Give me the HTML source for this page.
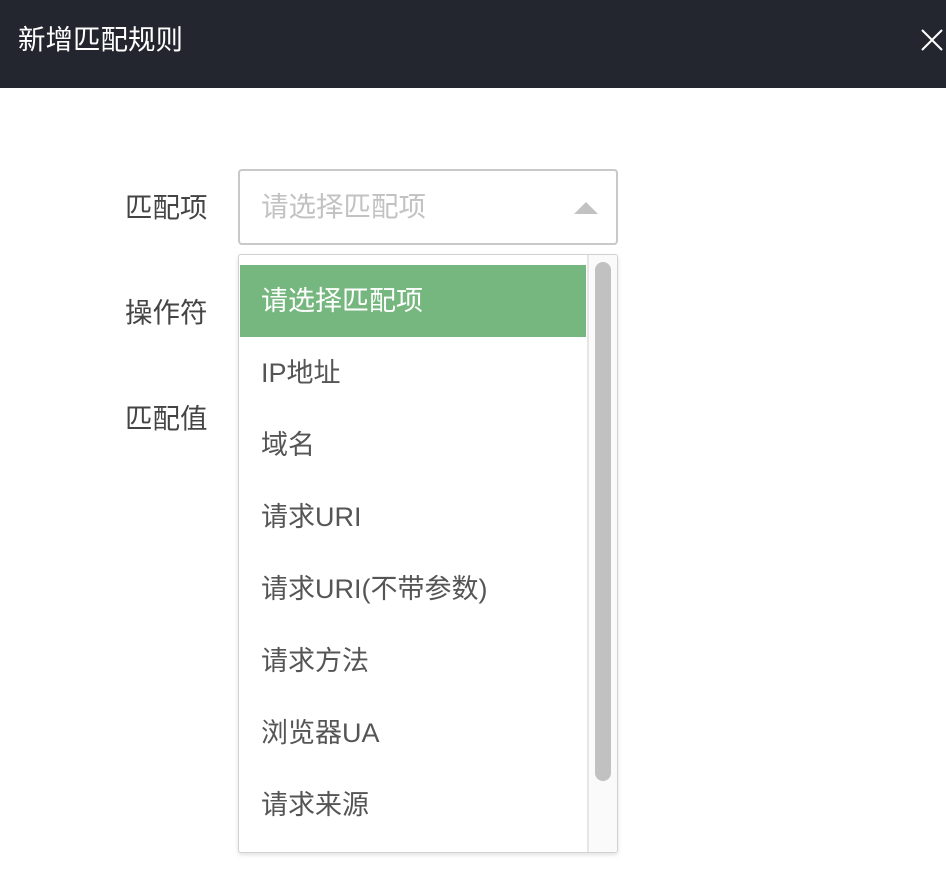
<!DOCTYPE html>
<html><head><meta charset="utf-8"><style>
*{margin:0;padding:0;box-sizing:border-box}
body{width:946px;height:882px;background:#fff;font-family:"Liberation Sans","Noto Sans CJK SC",sans-serif;position:relative;overflow:hidden}
.hd{position:absolute;left:0;top:0;width:946px;height:88px;background:#23262e}
.hd .t{position:absolute;left:18px;top:22px;font-size:27.5px;line-height:36px;color:#fff}
.lbl{position:absolute;left:125px;font-size:27.5px;color:#444;line-height:36px}
.sel{position:absolute;left:238px;top:169px;width:380px;height:76px;border:2px solid #c9c9c9;border-radius:4px}
.sel .p{position:absolute;left:21px;top:18px;font-size:27.5px;line-height:36px;color:#c2c2c2}
.tri{position:absolute;left:334px;top:31px;width:0;height:0;border-left:12px solid transparent;border-right:12px solid transparent;border-bottom:12px solid #c2c2c2}
.dd{position:absolute;left:238px;top:254px;width:380px;height:599px;border:1px solid #d2d2d2;border-radius:3px;background:#fff;box-shadow:0 2px 4px rgba(0,0,0,.12);overflow:hidden}
.it{position:absolute;left:1px;width:346px;height:72px;padding-left:21px;font-size:27px;line-height:72px;color:#555}
.it.a{background:#76b77f;color:#fff}
.trk{position:absolute;left:348px;top:0;width:30px;height:597px;background:#fafafa;border-left:2px solid #e6e6e6}
.th{position:absolute;left:6px;top:7px;width:16px;height:519px;border-radius:8px;background:#c1c1c1}
</style></head><body>
<div class="hd"><div class="t">新增匹配规则</div>
<svg style="position:absolute;left:921px;top:29px" width="22" height="22" viewBox="0 0 22 22"><path d="M1 1L21 21M21 1L1 21" stroke="#fff" stroke-width="2"/></svg></div>
<div class="lbl" style="top:190px">匹配项</div>
<div class="lbl" style="top:295px">操作符</div>
<div class="lbl" style="top:401px">匹配值</div>
<div class="sel"><div class="p">请选择匹配项</div><div class="tri"></div></div>
<div class="dd">
<div class="it a" style="top:10px">请选择匹配项</div>
<div class="it" style="top:82px">IP地址</div>
<div class="it" style="top:154px">域名</div>
<div class="it" style="top:226px">请求URI</div>
<div class="it" style="top:298px">请求URI(不带参数)</div>
<div class="it" style="top:370px">请求方法</div>
<div class="it" style="top:442px">浏览器UA</div>
<div class="it" style="top:514px">请求来源</div>
<div class="trk"><div class="th"></div></div>
</div>
</body></html>
